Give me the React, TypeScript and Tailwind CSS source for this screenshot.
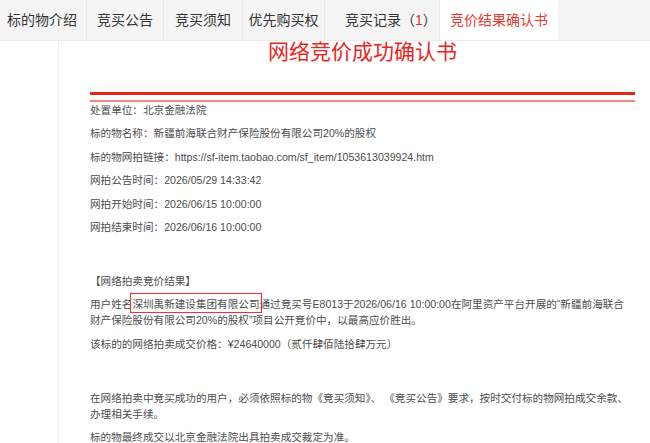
import React from "react";

const tabs = [
  { label: "标的物介绍", w: "w-[87px]", pl: "pl-[7px] justify-start" },
  { label: "竞买公告", w: "w-[77px]", pl: "justify-center" },
  { label: "竞买须知", w: "w-[79px]", pl: "justify-center" },
  { label: "优先购买权", w: "w-[82px]", pl: "justify-center" },
];

export default function App() {
  return (
    <div className="w-[650px] h-[443px] overflow-hidden bg-white font-['Liberation_Sans','Noto_Sans_CJK_SC',sans-serif]">
      <div className="flex h-[41px] bg-[#f5f5f5] border-b border-[#ebebeb]">
        {tabs.map((t) => (
          <div
            key={t.label}
            className={`${t.w} ${t.pl} flex items-center border-r border-[#e9e9e9] text-[14px] text-[#333]`}
          >
            {t.label}
          </div>
        ))}
        <div className="w-[115px] flex items-center pl-[20px] border-r border-[#e9e9e9] text-[14px] text-[#333]">
          竞买记录（<span className="text-[#d9302a]">1</span>）
        </div>
        <div className="w-[118px] flex items-center justify-center bg-white text-[14px] text-[#e43b2f]">
          竞价结果确认书
        </div>
        <div className="flex-1" />
      </div>

      <div className="flex h-[402px]">
        <div className="w-[58px] shrink-0" />
        <div className="flex-1 border-l border-[#eeeeee] pl-[31px]">
          <div className="w-[545px]">
            <div className="text-center text-[21px] leading-[22px] text-[#e8261e]">
              网络竞价成功确认书
            </div>
            <div className="mt-[29px] h-[3px] bg-[#e2261a]" />
            <div className="mt-[5px] h-[2px] bg-[#ee8a7c]" />

            <div className="text-[10.6px] leading-[16px] text-[#4d4d4d] whitespace-nowrap">
              <p className="mb-[7.4px]">处置单位：北京金融法院</p>
              <p className="mb-[7.4px]">标的物名称：新疆前海联合财产保险股份有限公司20%的股权</p>
              <p className="mb-[7.4px]">标的物网拍链接：https://sf-item.taobao.com/sf_item/1053613039924.htm</p>
              <p className="mb-[7.4px]">网拍公告时间：2026/05/29 14:33:42</p>
              <p className="mb-[7.4px]">网拍开始时间：2026/06/15 10:00:00</p>
              <p className="mb-[7.4px]">网拍结束时间：2026/06/16 10:00:00</p>

              <div className="h-[30.6px]" />

              <p className="mb-[7.4px]">【网络拍卖竞价结果】</p>
              <p className="mb-[7.4px]">
                用户姓名
                <span className="relative inline-block leading-[16px]">
                  深圳禹新建设集团有限公司
                  <span className="absolute top-[-3px] bottom-[-1px] left-[-2px] right-[-2px] border-[1.5px] border-solid border-red-500" />
                </span>
                通过竞买号E8013于2026/06/16 10:00:00在阿里资产平台开展的“新疆前海联合
                <br />
                财产保险股份有限公司20%的股权”项目公开竞价中，以最高应价胜出。
              </p>
              <p className="mb-[7.4px]">该标的的网络拍卖成交价格：¥24640000（贰仟肆佰陆拾肆万元）</p>

              <div className="h-[30.6px]" />

              <p className="mb-[7.4px]">
                在网络拍卖中竞买成功的用户，必须依照标的物《竞买须知》、 《竞买公告》要求，按时交付标的物网拍成交余款、
                <br />
                办理相关手续。
              </p>
              <p className="mb-[7.4px]">标的物最终成交以北京金融法院出具拍卖成交裁定为准。</p>
            </div>
          </div>
        </div>
      </div>
    </div>
  );
}
